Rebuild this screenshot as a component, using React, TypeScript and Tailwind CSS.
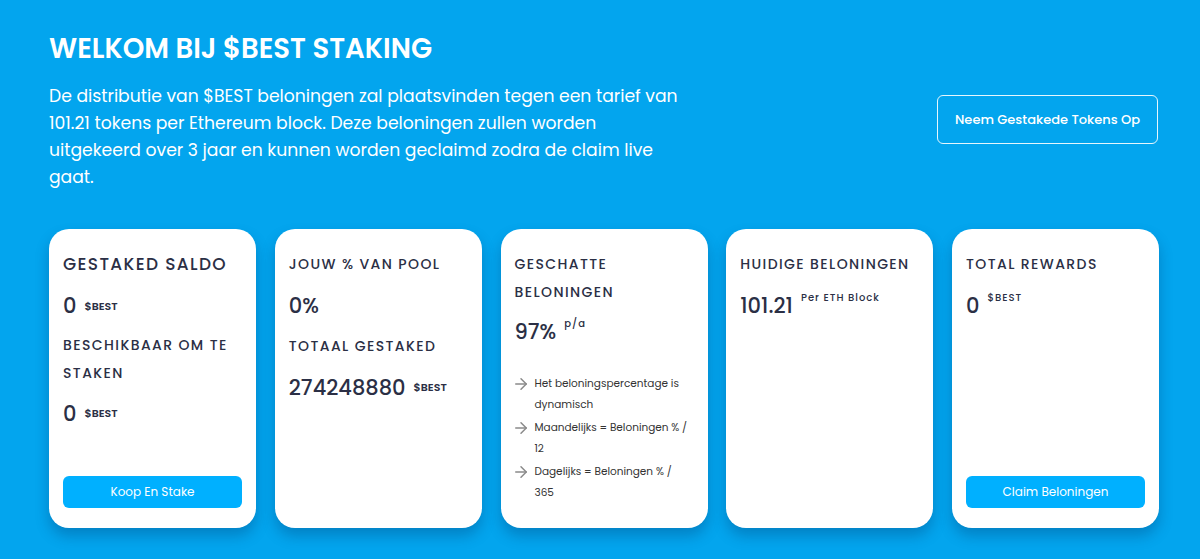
import { ArrowRight } from "lucide-react";

const FONT = { fontFamily: "Poppins, Inter, 'Noto Sans', sans-serif" };

function Unit({ children, sup }: { children: React.ReactNode; sup?: boolean }) {
  return (
    <span
      className={
        sup
          ? "ml-2 self-start text-[10px] font-medium tracking-[0.1em] text-[#2b2f45]"
          : "ml-2 text-[11px] font-semibold text-[#2b2f45]"
      }
    >
      {children}
    </span>
  );
}

function Card({ children }: { children: React.ReactNode }) {
  return (
    <div className="flex h-[299px] w-[207px] flex-col rounded-[20px] bg-white px-[14px] pb-[20px] pt-[21px] shadow-[0_8px_14px_rgba(0,40,90,0.28)]">
      {children}
    </div>
  );
}

const label = "text-[14px] font-medium uppercase leading-[28px] tracking-[0.1em] text-[#2b2f45]";
const value = "text-[21px] font-medium text-[#2b2f45]";

export default function App() {
  const notes = [
    "Het beloningspercentage is dynamisch",
    "Maandelijks = Beloningen % / 12",
    "Dagelijks = Beloningen % / 365",
  ];

  return (
    <div style={FONT} className="h-[559px] w-[1200px] overflow-hidden bg-[#03a5ee] pl-[49px] pt-[30px]">
      <div className="flex w-[1110px] items-start justify-between">
        <div className="w-[640px]">
          <h1 className="text-[27.5px] font-semibold leading-[38px] text-white">WELKOM BIJ $BEST STAKING</h1>
          <p className="mt-[15px] text-[17.2px] leading-[27px] text-white">
            De distributie van $BEST beloningen zal plaatsvinden tegen een tarief van 101.21 tokens per
            Ethereum block. Deze beloningen zullen worden uitgekeerd over 3 jaar en kunnen worden
            geclaimd zodra de claim live gaat.
          </p>
        </div>
        <button className="mr-[1px] mt-[65px] h-[49px] w-[221px] rounded-[6px] border border-white/90 text-[13px] font-medium text-white">
          Neem Gestakede Tokens Op
        </button>
      </div>

      <div className="mt-[38px] flex w-[1110px] justify-between">
        <Card>
          <div className="text-[17px] font-medium uppercase leading-[28px] tracking-[0.08em] text-[#2b2f45]">
            Gestaked Saldo
          </div>
          <div className="mt-[12px] flex items-center">
            <span className={value}>0</span>
            <Unit>$BEST</Unit>
          </div>
          <div className={`${label} mt-[9px]`}>Beschikbaar om te staken</div>
          <div className="mt-[11px] flex items-center">
            <span className={value}>0</span>
            <Unit>$BEST</Unit>
          </div>
          <button className="mt-auto h-[32px] w-full rounded-[6px] bg-[#00b0ff] text-[12px] text-white">
            Koop En Stake
          </button>
        </Card>

        <Card>
          <div className={label}>Jouw % van pool</div>
          <div className={`${value} mt-[12px]`}>0%</div>
          <div className={`${label} mt-[10px]`}>Totaal gestaked</div>
          <div className="mt-[12px] flex items-center">
            <span className={value}>274248880</span>
            <Unit>$BEST</Unit>
          </div>
        </Card>

        <Card>
          <div className={label}>Geschatte beloningen</div>
          <div className="mt-[10px] flex">
            <span className={value}>97%</span>
            <Unit sup>p/a</Unit>
          </div>
          <ul className="mt-[25px] flex flex-col gap-[2px]">
            {notes.map((n) => (
              <li key={n} className="flex items-start">
                <ArrowRight className="-ml-[3px] mr-[5px] mt-[2px] h-[18px] w-[18px] shrink-0 text-[#8a8a8a]" strokeWidth={2} />
                <span className="text-[10.5px] leading-[21px] text-[#333]">{n}</span>
              </li>
            ))}
          </ul>
        </Card>

        <Card>
          <div className={label}>Huidige beloningen</div>
          <div className="mt-[12px] flex">
            <span className={value}>101.21</span>
            <Unit sup>Per ETH Block</Unit>
          </div>
        </Card>

        <Card>
          <div className={label}>Total rewards</div>
          <div className="mt-[12px] flex">
            <span className={value}>0</span>
            <Unit sup>$BEST</Unit>
          </div>
          <button className="mt-auto h-[32px] w-full rounded-[6px] bg-[#00b0ff] text-[12px] text-white">
            Claim Beloningen
          </button>
        </Card>
      </div>
    </div>
  );
}
